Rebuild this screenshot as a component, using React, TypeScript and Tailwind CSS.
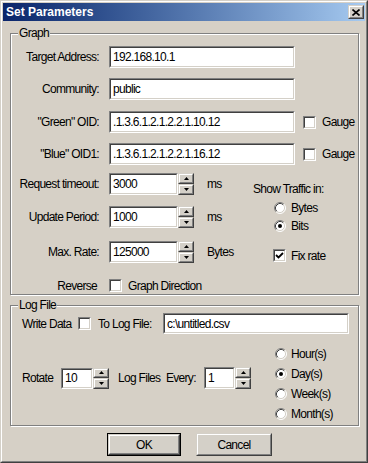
import React from 'react';

// classic win9x look
const Sunken: React.FC<{ className?: string; children?: React.ReactNode }> = ({ className = '', children }) => (
  <div className={`border border-t-[#808080] border-l-[#808080] border-b-white border-r-white ${className}`}>
    <div className="h-full w-full border border-t-[#404040] border-l-[#404040] border-b-[#d4d0c8] border-r-[#d4d0c8] bg-white flex items-center pl-[2px] overflow-hidden whitespace-nowrap">
      {children}
    </div>
  </div>
);

const Raised: React.FC<{ className?: string; children?: React.ReactNode }> = ({ className = '', children }) => (
  <div className={`border border-t-[#d4d0c8] border-l-[#d4d0c8] border-b-[#404040] border-r-[#404040] ${className}`}>
    <div className="h-full w-full border border-t-white border-l-white border-b-[#808080] border-r-[#808080] bg-[#d4d0c8] flex items-center justify-center">
      {children}
    </div>
  </div>
);

const Arrow: React.FC<{ up?: boolean }> = ({ up }) => (
  <svg width="5" height="3" viewBox="0 0 5 3">
    <polygon points={up ? '2.5,0 5,3 0,3' : '0,0 5,0 2.5,3'} fill="#000" />
  </svg>
);

const Spin: React.FC<{ value: string; w: string; h?: string }> = ({ value, w, h = 'h-[22px]' }) => (
  <div className={`flex ${w} ${h}`}>
    <Sunken className="flex-1 h-full">{value}</Sunken>
    <div className="flex flex-col w-[16px] h-full">
      <Raised className="flex-1">
        <Arrow up />
      </Raised>
      <Raised className="flex-1">
        <Arrow />
      </Raised>
    </div>
  </div>
);

const Check: React.FC<{ checked?: boolean }> = ({ checked }) => (
  <div className="w-[13px] h-[13px] shrink-0 border border-t-[#808080] border-l-[#808080] border-b-white border-r-white">
    <div className="w-full h-full border border-t-[#404040] border-l-[#404040] border-b-[#d4d0c8] border-r-[#d4d0c8] bg-white flex items-center justify-center">
      {checked && (
        <svg width="9" height="9" viewBox="0 0 9 9">
          <polyline points="1,4 3.5,6.5 8,2" fill="none" stroke="#000" strokeWidth="1.8" />
        </svg>
      )}
    </div>
  </div>
);

const Radio: React.FC<{ checked?: boolean }> = ({ checked }) => (
  <svg width="12" height="12" viewBox="0 0 12 12" className="shrink-0">
    <circle cx="6" cy="6" r="5" fill="#fff" />
    <path d="M2.11 9.89 A5.5 5.5 0 0 1 9.89 2.11" fill="none" stroke="#808080" />
    <path d="M2.82 9.18 A4.5 4.5 0 0 1 9.18 2.82" fill="none" stroke="#404040" />
    <path d="M9.89 2.11 A5.5 5.5 0 0 1 2.11 9.89" fill="none" stroke="#fff" />
    <path d="M9.18 2.82 A4.5 4.5 0 0 1 2.82 9.18" fill="none" stroke="#d4d0c8" />
    {checked && <circle cx="6" cy="6" r="2" fill="#000" />}
  </svg>
);

const Group: React.FC<{ title: string; className?: string; children?: React.ReactNode }> = ({ title, className = '', children }) => (
  <div className={`relative ml-[7px] w-[349px] border border-[#808080] shadow-[inset_1px_1px_0_#fff,1px_1px_0_#fff] ${className}`}>
    <span className="absolute left-[7px] top-[-8px] px-px bg-[#d6d0c6] leading-[15px]">{title}</span>
    {children}
  </div>
);

const FieldRow: React.FC<{ label: string; value: string; mt: string; gauge?: boolean }> = ({ label, value, mt, gauge }) => (
  <div className={`flex items-center h-[22px] ${mt}`}>
    <span className="w-[88px] text-right">{label}</span>
    <Sunken className="ml-[10px] w-[186px] h-full">{value}</Sunken>
    {gauge && (
      <>
        <div className="ml-[8px]">
          <Check />
        </div>
        <span className="ml-[6px]">Gauge</span>
      </>
    )}
  </div>
);

const SpinRow: React.FC<{ label: string; value: string; unit: string; mt: string }> = ({ label, value, unit, mt }) => (
  <div className={`flex items-center h-[22px] ${mt}`}>
    <span className="w-[88px] text-right">{label}</span>
    <div className="ml-[10px]">
      <Spin value={value} w="w-[85px]" />
    </div>
    <span className="ml-[13px]">{unit}</span>
  </div>
);

const App: React.FC = () => {
  return (
    <div className="w-[368px] h-[463px] bg-[#d6d0c6] border border-t-[#d4d0c8] border-l-[#d4d0c8] border-r-[#404040] border-b-[#404040] font-['Liberation_Sans',Arial,sans-serif] text-[12px] tracking-[-0.7px] leading-none text-black whitespace-nowrap select-none">
      <div className="w-full h-full border border-t-white border-l-white border-r-[#808080] border-b-[#808080] p-px flex flex-col">
        {/* title bar */}
        <div className="h-[18px] flex items-center bg-gradient-to-r from-[#0a246a] to-[#a6caf0] pl-[3px] pr-[1px]">
          <span className="font-bold text-[12px] tracking-normal text-white">Set Parameters</span>
          <Raised className="ml-auto w-[16px] h-[14px]">
            <svg width="8" height="7" viewBox="0 0 8 7">
              <path d="M0.5 0.5 L7.5 6.5 M7.5 0.5 L0.5 6.5" stroke="#000" strokeWidth="1.6" />
            </svg>
          </Raised>
        </div>

        <Group title="Graph" className="mt-[12px] h-[262px]">
          <FieldRow label="Target Address:" value="192.168.10.1" mt="mt-[12px]" />
          <FieldRow label="Community:" value="public" mt="mt-[10px]" />
          <FieldRow label={'"Green" OID:'} value=".1.3.6.1.2.1.2.2.1.10.12" mt="mt-[11px]" gauge />
          <FieldRow label={'"Blue" OID1:'} value=".1.3.6.1.2.1.2.2.1.16.12" mt="mt-[10px]" gauge />

          <div className="flex mt-[8px]">
            <div className="w-[242px]">
              <SpinRow label="Request timeout:" value="3000" unit="ms" mt="" />
              <SpinRow label="Update Period:" value="1000" unit="ms" mt="mt-[11px]" />
              <SpinRow label="Max. Rate:" value="125000" unit="Bytes" mt="mt-[13px]" />
            </div>
            <div className="flex flex-col">
              <div className="h-[13px] mt-[9px] flex items-center">Show Traffic in:</div>
              <div className="h-[13px] mt-[6px] ml-[21px] flex items-center">
                <Radio />
                <span className="ml-[5px]">Bytes</span>
              </div>
              <div className="h-[13px] mt-[5px] ml-[21px] flex items-center">
                <Radio checked />
                <span className="ml-[5px]">Bits</span>
              </div>
              <div className="h-[13px] mt-[17px] ml-[20px] flex items-center">
                <Check checked />
                <span className="ml-[5px]">Fix rate</span>
              </div>
            </div>
          </div>

          <div className="flex items-center h-[13px] mt-[16px]">
            <span className="w-[86px] text-right">Reverse</span>
            <div className="ml-[12px]">
              <Check />
            </div>
            <span className="ml-[6px]">Graph Direction</span>
          </div>
        </Group>

        <Group title="Log File" className="mt-[10px] h-[121px]">
          <div className="flex items-center h-[21px] mt-[7px] pl-[11px]">
            <span className="w-[56px]">Write Data</span>
            <Check />
            <span className="ml-[7px] w-[65px]">To Log File:</span>
            <Sunken className="w-[186px] h-full">c:\untitled.csv</Sunken>
          </div>
          <div className="flex items-start">
            <div className="w-[264px] mt-[33px] pl-[11px] flex items-center h-[22px]">
              <span className="w-[39px]">Rotate</span>
              <Spin value="10" w="w-[48px]" h="h-[21px]" />
              <span className="ml-[9px] w-[48px]">Log Files</span>
              <span className="w-[38px]">Every:</span>
              <Spin value="1" w="w-[47px]" />
            </div>
            <div className="flex flex-col mt-[13px]">
              {['Hour(s)', 'Day(s)', 'Week(s)', 'Month(s)'].map((t, i) => (
                <div key={t} className={`h-[13px] flex items-center ${i > 0 ? 'mt-[7px]' : ''}`}>
                  <Radio checked={t === 'Day(s)'} />
                  <span className="ml-[4px]">{t}</span>
                </div>
              ))}
            </div>
          </div>
        </Group>

        <div className="flex mt-[7px]">
          <div className="ml-[104px] w-[74px] h-[23px] border border-black">
            <Raised className="w-full h-full">OK</Raised>
          </div>
          <Raised className="ml-[15px] w-[76px] h-[23px]">Cancel</Raised>
        </div>
      </div>
    </div>
  );
};

export default App;
